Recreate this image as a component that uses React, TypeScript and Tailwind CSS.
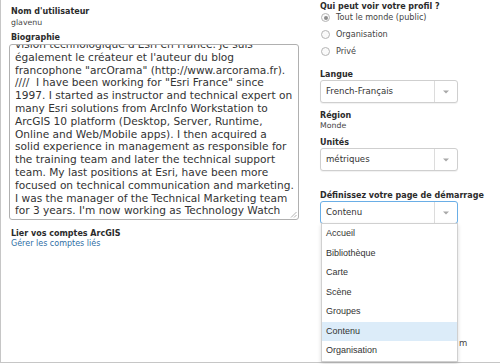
const bio = [
  "vision technologique d'Esri en France. Je suis",
  "également le créateur et l'auteur du blog",
  'francophone "arcOrama" (http://www.arcorama.fr).',
  '////  I have been working for "Esri France" since',
  "1997. I started as instructor and technical expert on",
  "many Esri solutions from ArcInfo Workstation to",
  "ArcGIS 10 platform (Desktop, Server, Runtime,",
  "Online and Web/Mobile apps). I then acquired a",
  "solid experience in management as responsible for",
  "the training team and later the technical support",
  "team. My last positions at Esri, have been more",
  "focused on technical communication and marketing.",
  "I was the manager of the Technical Marketing team",
  "for 3 years. I'm now working as Technology Watch",
  "Manager and Geo Evangelist and advising the",
];

const startPages = ["Accueil", "Bibliothèque", "Carte", "Scène", "Groupes", "Contenu", "Organisation"];

function Label({ children, className = "" }: { children: React.ReactNode; className?: string }) {
  return (
    <p className={`font-['DejaVu_Sans',sans-serif] font-bold text-[8px] leading-[10px] text-[#2b2b2b] ${className}`}>
      {children}
    </p>
  );
}

function Value({ children, className = "" }: { children: React.ReactNode; className?: string }) {
  return (
    <p className={`font-['DejaVu_Sans',sans-serif] text-[7.8px] leading-[10px] text-[#444] ${className}`}>{children}</p>
  );
}

function Radio({ label, checked = false }: { label: string; checked?: boolean }) {
  return (
    <div className="flex h-[11px] items-center gap-[6px] pl-[1px]">
      <span className="flex size-[9px] items-center justify-center rounded-full border border-[#b5b5b5] bg-[#fafafa]">
        {checked && <span className="size-[4px] rounded-full bg-[#8c8c8c]" />}
      </span>
      <span className="font-['DejaVu_Sans',sans-serif] text-[8.1px] text-[#444]">{label}</span>
    </div>
  );
}

function Select({ value, focused = false }: { value: string; focused?: boolean }) {
  return (
    <div
      className={`flex h-[23px] w-[138px] items-center rounded-[3px] border bg-white shadow-[0_1px_1px_rgba(0,0,0,0.06)] ${
        focused ? "border-[#6aaee6]" : "border-[#cfcfcf]"
      }`}
    >
      <span className="flex-1 pl-[5px] font-['DejaVu_Sans',sans-serif] text-[8.6px] text-[#333]">{value}</span>
      <span className="flex h-full w-[23px] items-center justify-center border-l border-[#dcdcdc]">
        <svg width="6" height="4" viewBox="0 0 6 4">
          <path d="M0 0.5h6L3 3.5z" fill="#a8a8a8" />
        </svg>
      </span>
    </div>
  );
}

function Biography() {
  return (
    <div className="relative h-[176px] w-[290px] overflow-hidden rounded-[3px] border border-[#b0b0b0] bg-white">
      <div className="-mt-[7px] pl-[5px] font-['DejaVu_Sans',sans-serif] text-[10.6px] leading-[12.8px] text-[#333]">
        {bio.map((line, i) => (
          <div key={i} className="whitespace-pre">
            {line}
          </div>
        ))}
      </div>
      <svg className="absolute bottom-[1px] right-[1px]" width="7" height="7" viewBox="0 0 7 7">
        <path d="M1 6.5L6.5 1M4 6.5L6.5 4" stroke="#a0a0a0" strokeWidth="0.8" />
      </svg>
    </div>
  );
}

function LeftColumn() {
  return (
    <div className="ml-[8px] flex w-[290px] flex-col">
      <Label className="mt-[7px] pl-[2px]">Nom d'utilisateur</Label>
      <Value className="mt-[1px] pl-[2px]">glavenu</Value>
      <Label className="mt-[5px] pl-[2px]">Biographie</Label>
      <div className="mt-[1px]">
        <Biography />
      </div>
      <Label className="mt-[9px] pl-[2px]">Lier vos comptes ArcGIS</Label>
      <p className="pl-[2px] font-['DejaVu_Sans',sans-serif] text-[8px] leading-[10px] text-[#2f6ea5]">
        Gérer les comptes liés
      </p>
    </div>
  );
}

function StartPage() {
  return (
    <div className="relative">
      <Select value="Contenu" focused />
      <div className="absolute left-[1px] top-[22px] z-10 w-[137px] border border-[#d0d0d0] bg-white shadow-[0_2px_4px_rgba(0,0,0,0.15)]">
        {startPages.map((p) => (
          <div
            key={p}
            className={`flex h-[19.5px] items-center pl-[4px] font-['Liberation_Sans',sans-serif] text-[9px] text-[#333] ${
              p === "Contenu" ? "bg-[#dcecf9]" : ""
            }`}
          >
            {p}
          </div>
        ))}
      </div>
    </div>
  );
}

function RightColumn() {
  return (
    <div className="ml-[21px] flex w-[170px] flex-col">
      <Label className="mt-[2px]">Qui peut voir votre profil ?</Label>
      <div className="mt-[0px] flex flex-col gap-[6px]">
        <Radio label="Tout le monde (public)" checked />
        <Radio label="Organisation" />
        <Radio label="Privé" />
      </div>
      <Label className="mt-[13px]">Langue</Label>
      <Select value="French-Français" />
      <Label className="mt-[8px]">Région</Label>
      <Value>Monde</Value>
      <Label className="mt-[7px]">Unités</Label>
      <Select value="métriques" />
      <Label className="mt-[20px]">Définissez votre page de démarrage</Label>
      <StartPage />
      <p className="mt-[114px] pl-[139px] font-['DejaVu_Sans',sans-serif] text-[8.5px] leading-[10px] text-[#444]">m</p>
    </div>
  );
}

export default function App() {
  return (
    <div className="h-[364px] w-[500px] overflow-hidden bg-white">
      <div className="flex h-[363px] w-[500px] border-b border-l border-[#c6c6c6]">
        <LeftColumn />
        <RightColumn />
      </div>
    </div>
  );
}
